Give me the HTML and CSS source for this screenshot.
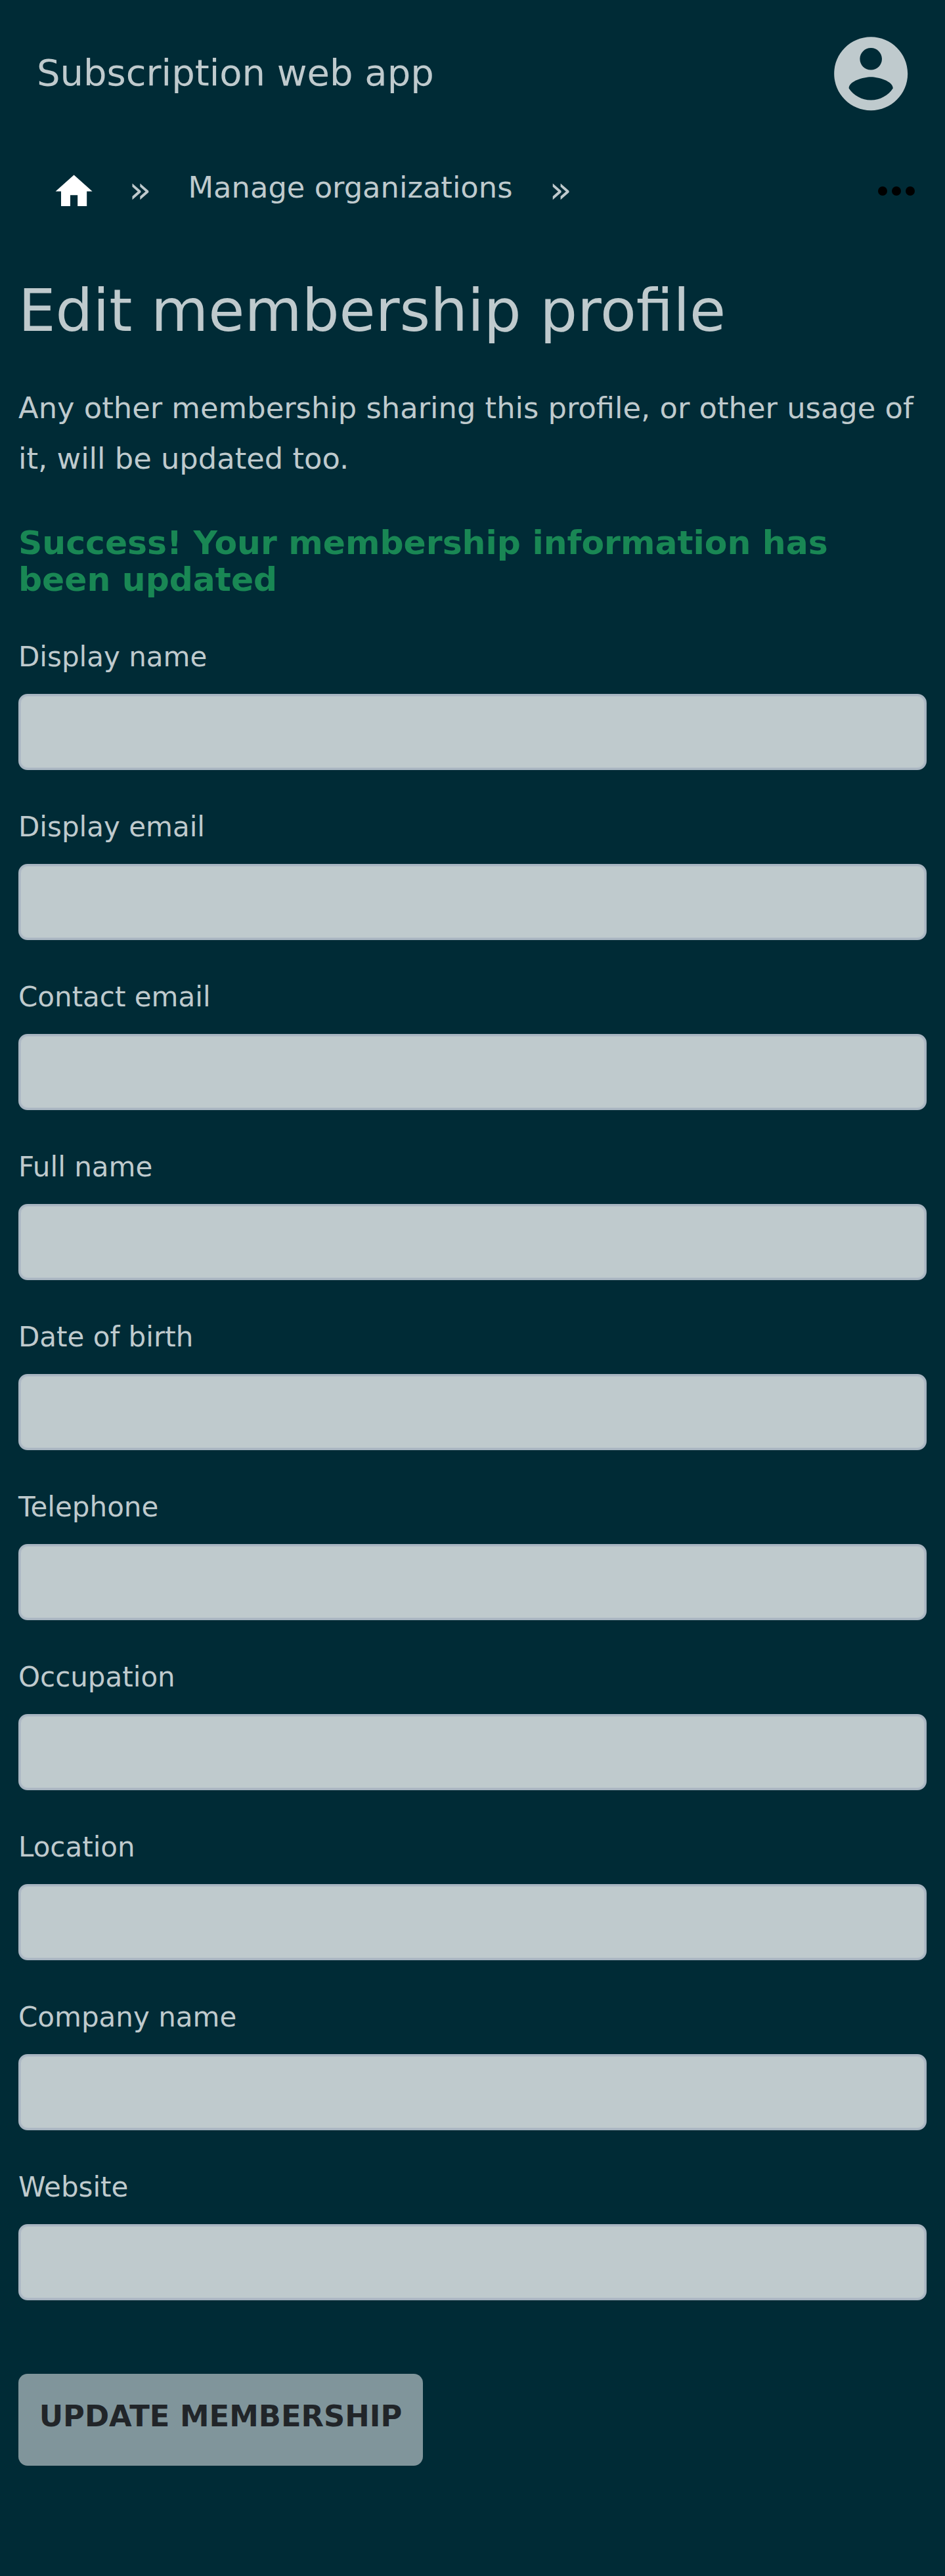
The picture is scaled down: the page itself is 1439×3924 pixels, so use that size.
FILE: index.html
```html
<!DOCTYPE html>
<html lang="en">
<head>
<meta charset="utf-8">
<title>Edit membership profile</title>
<link rel="stylesheet" href="styles.css">
</head>
<body>
<header class="topbar">
  <span class="brand">Subscription web app</span>
  <svg class="account" viewBox="0 0 24 24"><path fill-rule="evenodd" d="M12 2C6.48 2 2 6.48 2 12s4.48 10 10 10 10-4.48 10-10S17.52 2 12 2zm0 3c1.66 0 3 1.34 3 3s-1.34 3-3 3-3-1.34-3-3 1.34-3 3-3zm0 14.2c-2.5 0-4.71-1.28-6-3.22.03-1.99 4-3.08 6-3.08 1.99 0 5.97 1.09 6 3.08-1.29 1.94-3.5 3.22-6 3.22z"/></svg>
</header>
<nav class="crumbs">
  <svg class="home" viewBox="0 0 24 24"><path d="M10 20v-6h4v6h5v-8h3L12 3 2 12h3v8z"/></svg>
  <span class="sep">»</span>
  <a class="crumb">Manage organizations</a>
  <span class="sep">»</span>
  <svg class="more" viewBox="0 0 24 24"><circle cx="6" cy="12" r="2"/><circle cx="12" cy="12" r="2"/><circle cx="18" cy="12" r="2"/></svg>
</nav>
<main class="content">
  <h1 class="title">Edit membership profile</h1>
  <p class="intro">Any other membership sharing this profile, or other usage of it, will be updated too.</p>
  <p class="success">Success! Your membership information has been updated</p>
  <form class="form">
    <label class="field"><span class="label">Display name</span><input class="input" type="text"></label>
    <label class="field"><span class="label">Display email</span><input class="input" type="text"></label>
    <label class="field"><span class="label">Contact email</span><input class="input" type="text"></label>
    <label class="field"><span class="label">Full name</span><input class="input" type="text"></label>
    <label class="field"><span class="label">Date of birth</span><input class="input" type="text"></label>
    <label class="field"><span class="label">Telephone</span><input class="input" type="text"></label>
    <label class="field"><span class="label">Occupation</span><input class="input" type="text"></label>
    <label class="field"><span class="label">Location</span><input class="input" type="text"></label>
    <label class="field"><span class="label">Company name</span><input class="input" type="text"></label>
    <label class="field"><span class="label">Website</span><input class="input" type="text"></label>
    <button class="submit" type="button">UPDATE MEMBERSHIP</button>
  </form>
</main>
</body>
</html>
```
FILE: styles.css
```css
* { box-sizing: border-box; }
body {
  margin: 0;
  min-height: 3924px;
  background: #002b36;
  color: #bfcacd;
  font-family: "DejaVu Sans", sans-serif;
}
.topbar {
  display: flex;
  align-items: center;
  justify-content: space-between;
  height: 224px;
  padding: 0 45.5px 0 56px;
}
.brand { margin-bottom: 3px; font-size: 56px; line-height: 66px; }
.account { width: 134.4px; height: 134.4px; fill: #bfcacd; }
.crumbs {
  display: flex;
  align-items: center;
  height: 133px;
  padding: 0 32px 0 79px;
}
.home { width: 67.2px; height: 67.2px; margin-top: 2px; fill: #fff; }
.sep { margin: 0 56px 4px 50px; font-size: 56px; line-height: 66px; }
.crumb { font-size: 44.8px; line-height: 54px; margin-bottom: 9px; }
.crumb + .sep { margin-left: 56px; }
.more { width: 84px; height: 84px; margin-left: auto; }
.content { padding: 63px 28px 0; }
.title { margin: 0; font-size: 89.6px; line-height: 106px; font-weight: 400; }
.intro { margin: 57px 0 0; font-size: 44.8px; line-height: 77px; }
.success { margin: 61.5px 0 0; font-size: 50.4px; line-height: 56px; font-weight: 700; color: #198754; }
.form { margin-top: 65px; }
.field { display: block; height: 259px; }
.label { display: block; font-size: 42px; line-height: 50px; }
.input {
  display: block;
  width: 1383px;
  height: 115.5px;
  margin: 31.5px 0 0;
  border: 3px solid #a9b5c1;
  border-radius: 14px;
  background: #bfcacd;
  box-shadow: inset 0 0 0 1px #b3bec8;
}
.submit {
  display: block;
  width: 616px;
  height: 140px;
  margin: 50px 0 0;
  padding: 35px 0 45px;
  border: 0;
  border-radius: 14px;
  background: #80959b;
  color: #212529;
  font: 700 44.8px/60px "DejaVu Sans", sans-serif;
  text-align: center;
}
```
